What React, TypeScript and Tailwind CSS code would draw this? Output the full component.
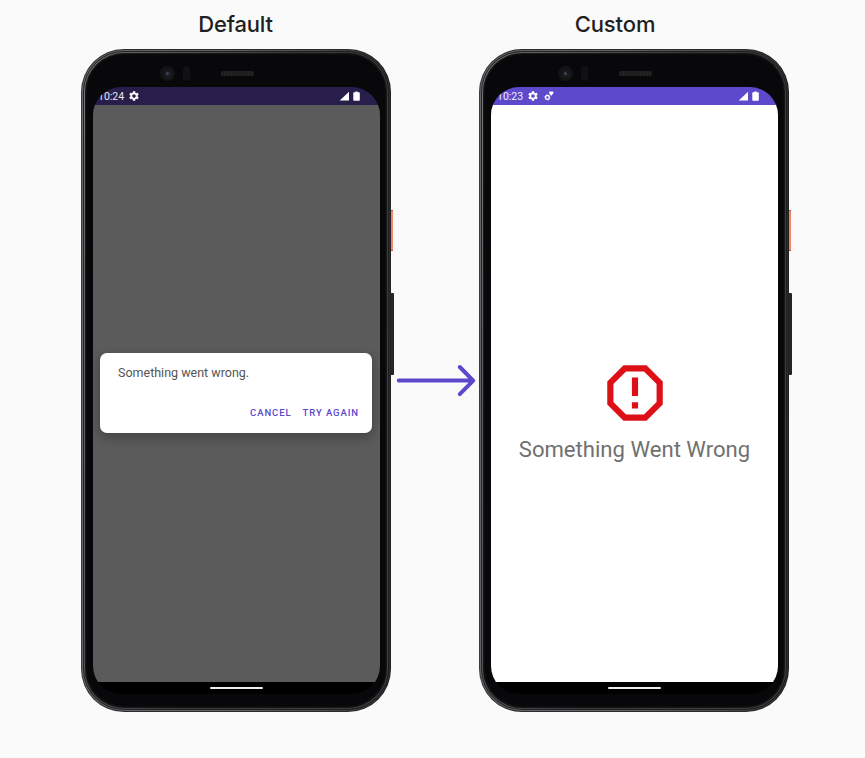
import type { ReactNode } from "react";

function Gear({ className }: { className: string }) {
  return (
    <svg viewBox="0 0 24 24" className={className} fill="#fff">
      <path
        fillRule="evenodd"
        d="M19.14 12.94c.04-.3.06-.61.06-.94 0-.32-.02-.64-.07-.94l2.03-1.58c.18-.14.23-.41.12-.61l-1.92-3.32c-.12-.22-.37-.29-.59-.22l-2.39.96c-.5-.38-1.03-.7-1.62-.94l-.36-2.54c-.04-.24-.24-.41-.48-.41h-3.84c-.24 0-.43.17-.47.41l-.36 2.54c-.59.24-1.13.57-1.62.94l-2.39-.96c-.22-.08-.47 0-.59.22L2.74 8.87c-.12.21-.08.47.12.61l2.03 1.58c-.05.3-.09.63-.09.94s.02.64.07.94l-2.03 1.58c-.18.14-.23.41-.12.61l1.92 3.32c.12.22.37.29.59.22l2.39-.96c.5.38 1.03.7 1.62.94l.36 2.54c.05.24.24.41.48.41h3.84c.24 0 .44-.17.47-.41l.36-2.54c.59-.24 1.13-.56 1.62-.94l2.39.96c.22.08.47 0 .59-.22l1.92-3.32c.12-.22.07-.47-.12-.61l-2.01-1.58zM12 15.6c-1.98 0-3.6-1.62-3.6-3.6s1.62-3.6 3.6-3.6 3.6 1.62 3.6 3.6-1.62 3.6-3.6 3.6z"
      />
    </svg>
  );
}

function SmallGears() {
  return (
    <svg viewBox="0 0 10 10" className="ml-[5px] h-[10px] w-[10px]" fill="none">
      <circle cx="3.4" cy="6.4" r="1.9" stroke="#fff" strokeWidth="1.3" />
      <circle cx="3.4" cy="6.4" r="2.7" stroke="#fff" strokeWidth="0.7" strokeDasharray="1.2 1.6" />
      <path d="M4.8 1.4L5.8 .6h3l.8 1.1L7.5 4.8 6.3 4z" fill="#fff" />
    </svg>
  );
}

function StatusBar({ time, color, extra }: { time: string; color: string; extra?: boolean }) {
  return (
    <div className={`flex h-[18px] shrink-0 items-center ${extra ? "pl-[6px] pr-[19px]" : "pl-[5px] pr-[20px]"} ${color}`}>
      <span className="mt-[2px] w-[26px] whitespace-nowrap font-['Roboto',sans-serif] text-[10.5px] leading-[12px] text-white/90">
        {time}
      </span>
      <Gear className="ml-[4px] h-[12px] w-[12px]" />
      {extra && <SmallGears />}
      <svg viewBox="0 0 21 10" className="ml-auto h-[10px] w-[21px]" fill="#fff">
        <path d="M.7 9.6H10V.7z" />
        <path d="M15 1.3h1.4V.4h2.2v.9H20q.8 0 .8.8v6.8q0 .8-.8.8h-4.9q-.8 0-.8-.8V2.1q0-.8.7-.8z" />
      </svg>
    </div>
  );
}

function Phone({ children }: { children: ReactNode }) {
  return (
    <div className="relative h-[664px] w-[311px] shrink-0">
      <div className="absolute left-[307.5px] top-[161px] h-[41px] w-[4.5px] border-y border-[#b65847] bg-[#f3856d]" />
      <div className="absolute left-[308px] top-[244px] h-[82px] w-[4.5px] rounded-r-[1px] bg-[#242525]" />
      <div className="relative h-[663px] w-[310px] rounded-[43px] bg-[linear-gradient(90deg,#393b3d,#2b2c2d_8%,#2a2a2a_90%,#202121)] p-px">
        <div className="h-full w-full rounded-[42px] bg-[linear-gradient(90deg,#626567,#606364_45%,#484949_80%,#2b2c2c)] p-px">
          <div className="h-full w-full rounded-[41px] bg-[linear-gradient(90deg,#242526,#1d1e1f)] p-px">
            <div className="h-full w-full rounded-[40px] bg-[linear-gradient(100deg,#777977,#626362_10%,#343535_50%,#404142)] p-px">
              <div className="flex h-full w-full flex-col rounded-[39px] bg-[#08080a] px-[8px] shadow-[inset_0_0_3px_#303131]">
                <div className="flex h-[34px] shrink-0 items-start pl-[67px] pt-[13px]">
                  <div className="flex h-[15px] w-[15px] items-center justify-center rounded-full bg-[#131415]">
                    <div className="flex h-[8px] w-[8px] items-center justify-center rounded-full bg-[#1a1b20]">
                      <div className="h-[3px] w-[3px] rounded-full bg-[#444657]" />
                    </div>
                  </div>
                  <div className="ml-[8px] h-[15px] w-[7px] rounded-full bg-[#101112]" />
                  <div className="ml-[31px] mt-[5px] h-[5px] w-[33px] rounded-[2px] bg-[repeating-linear-gradient(90deg,#222_0px,#222_2px,#1a1a1a_2px,#1a1a1a_3px)]" />
                </div>
                <div className="flex h-[607px] w-[287px] shrink-0 flex-col overflow-hidden rounded-[28px] bg-black">
                  {children}
                  <div className="flex h-[12px] shrink-0 justify-center pt-[5px]">
                    <div className="h-[2px] w-[53px] rounded-full bg-[#ecece8]" />
                  </div>
                </div>
              </div>
            </div>
          </div>
        </div>
      </div>
    </div>
  );
}

export default function App() {
  return (
    <div className="flex h-[758px] w-[865px] items-start overflow-hidden bg-[#fafafa] pl-[81px]">
      <section className="flex w-[311px] shrink-0 flex-col">
        <h2 className="h-[49px] pr-[2px] pt-[10px] text-center font-['Inter',sans-serif] text-[22px] font-medium leading-[29px] tracking-[-0.2px] text-[#1f2121]">
          Default
        </h2>
        <Phone>
          <StatusBar time="10:24" color="bg-[#271e4c]" />
          <div className="flex flex-1 flex-col bg-[#5b5b5b] px-[7px] pt-[248.4px]">
            <div className="flex h-[80px] w-[272.4px] flex-col rounded-[7px] bg-white pl-[18px] pr-[13.4px] pt-[11.6px] font-['Roboto',sans-serif] shadow-[0_4px_10px_2px_rgba(0,0,0,0.22)]">
              <p className="text-[12.5px] leading-[16px] text-[#555]">Something went wrong.</p>
              <div className="mt-[26px] flex justify-end gap-[11px] text-[9.5px] font-medium leading-[12px] tracking-[0.92px] text-[#5b48cb]">
                <button>CANCEL</button>
                <button>TRY AGAIN</button>
              </div>
            </div>
          </div>
        </Phone>
      </section>

      <svg
        viewBox="0 0 88 40"
        className="-ml-[1px] mt-[361px] h-[40px] w-[88px] shrink-0"
        fill="none"
        stroke="#5b48cb"
        strokeWidth="4"
        strokeLinecap="round"
        strokeLinejoin="round"
      >
        <path d="M7.8 19.6H81.5M68.8 6L82.2 19.6L68.8 33.2" />
      </svg>

      <section className="flex w-[311px] shrink-0 flex-col">
        <h2 className="h-[49px] pr-[39px] pt-[10px] text-center font-['Inter',sans-serif] text-[22px] font-medium leading-[29px] tracking-[-0.1px] text-[#1f2121]">
          Custom
        </h2>
        <Phone>
          <StatusBar time="10:23" color="bg-[#5c49cb]" extra />
          <div className="flex flex-1 flex-col items-center bg-white pt-[251px]">
            <svg viewBox="0 0 24 24" className="h-[74px] w-[74px]" fill="#dd1018">
              <path d="M15.73 3H8.27L3 8.27v7.46L8.27 21h7.46L21 15.73V8.27L15.73 3zM19 14.9L14.9 19H9.1L5 14.9V9.1L9.1 5h5.8L19 9.1v5.8z" />
              <path d="M11 7h2v6h-2zM11 15h2v2h-2z" />
            </svg>
            <p className="mt-[4px] whitespace-nowrap font-['Roboto',sans-serif] text-[22.1px] leading-[30px] text-[#707070]">
              Something Went Wrong
            </p>
          </div>
        </Phone>
      </section>
    </div>
  );
}
